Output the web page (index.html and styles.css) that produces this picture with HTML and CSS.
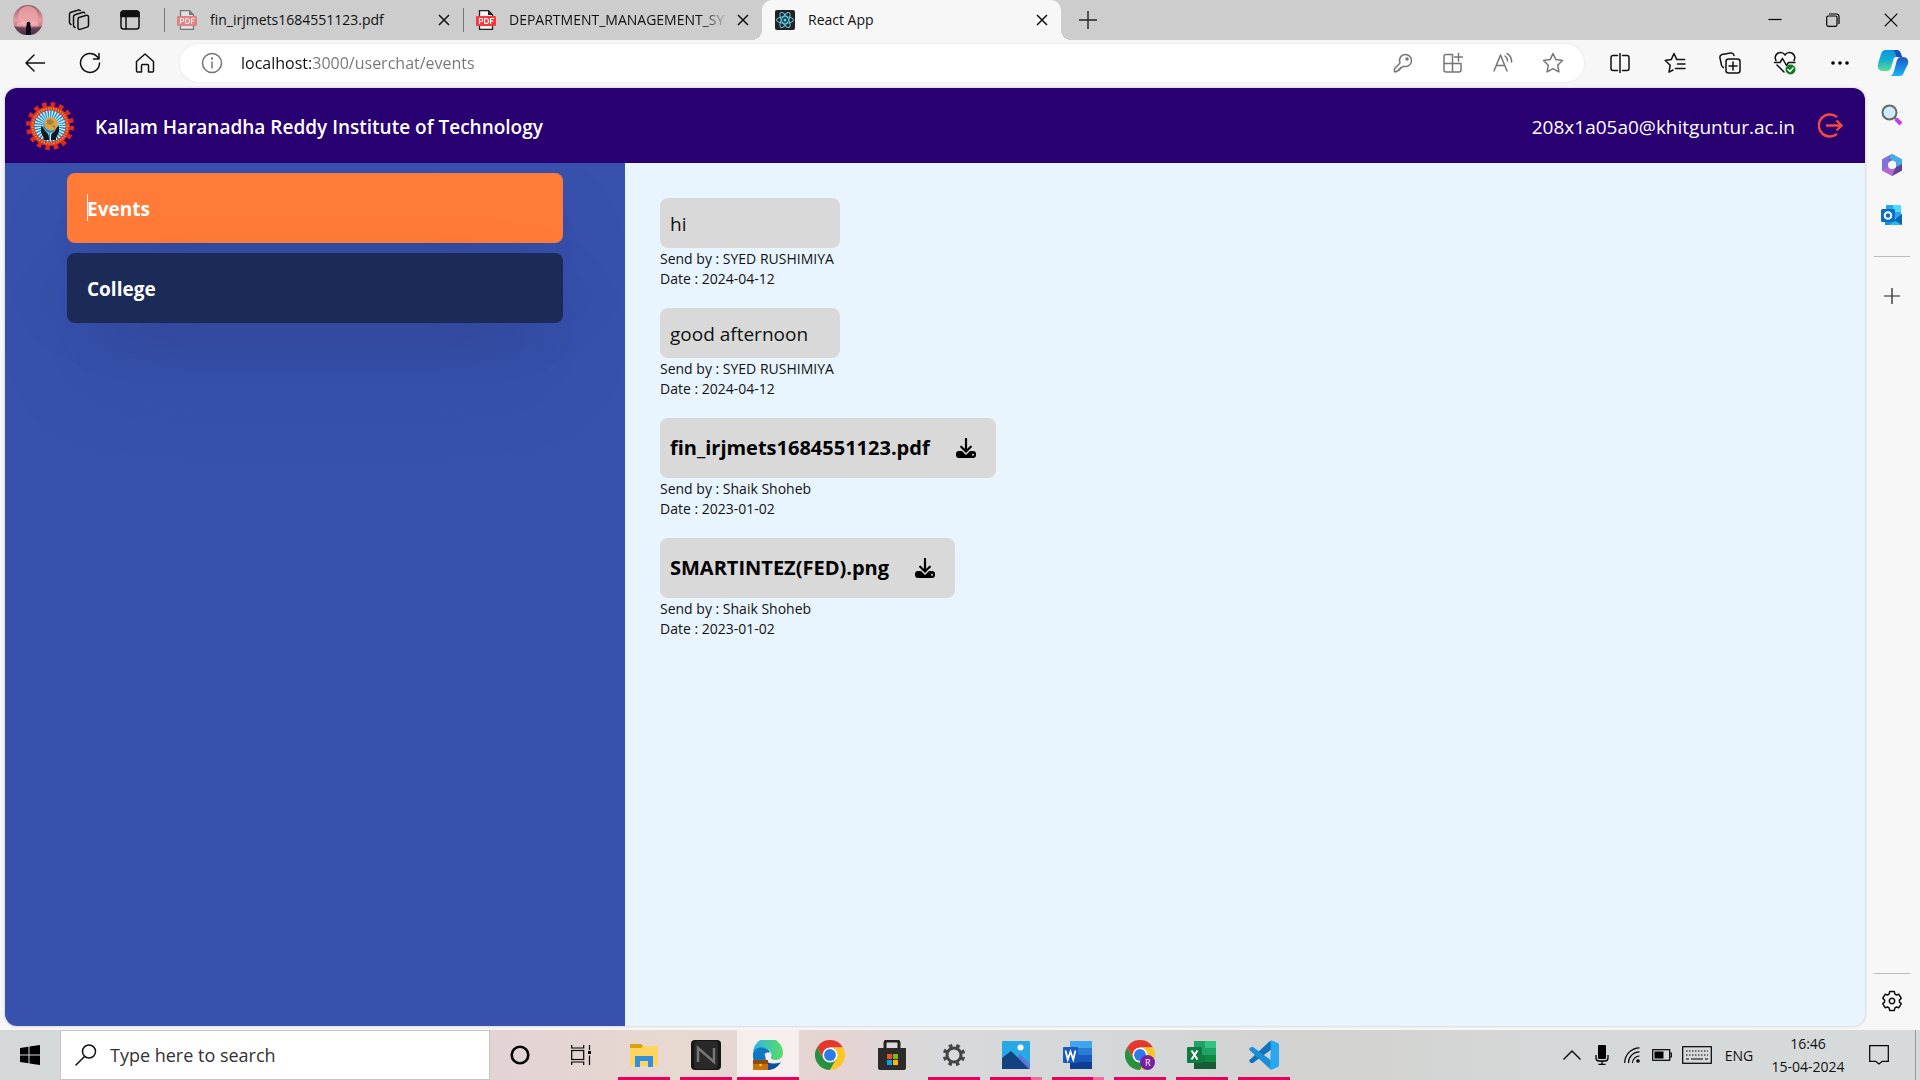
FILE: index.html
```html
<!DOCTYPE html>
<html lang="en">
<head>
<meta charset="utf-8">
<title>React App</title>
<link rel="stylesheet" href="styles.css">
</head>
<body>
<svg class="defs" aria-hidden="true">
  <symbol id="close" viewBox="0 0 12 12"><path d="M1 1l10 10M11 1L1 11" fill="none" stroke="#111" stroke-width="1.5"/></symbol>
  <symbol id="pdf" viewBox="0 0 20 20"><path d="M3.500 .7h9l4 4v14.600h-13z" fill="#f4f4f4" stroke="#222" stroke-width="1.300"/><path d="M12 0v5h5z" fill="#222"/><rect y="6" width="20" height="10" rx="1" fill="#f8383c"/><path d="M3.500 14V8.500h1.700a1.500 1.500 0 0 1 0 3H3.500M8.700 8.500v5h1.300a2.500 2.500 0 0 0 0-5zM14.500 14V8.500H18M14.500 11.200h2.700" fill="none" stroke="#fff" stroke-width="1.200"/></symbol>
  <symbol id="plus" viewBox="0 0 18 18"><path d="M9 0v18M0 9h18" stroke="#222" stroke-width="1.400"/></symbol>
  <symbol id="chrome" viewBox="0 0 48 48"><path d="M24 12H44.800A24 24 0 0 0 3.200 12L13.600 30 24 24z" fill="#e3382c"/><path d="M3.200 12A24 24 0 0 0 24 48L34.400 30 24 24 13.600 30z" fill="#27913f"/><path d="M24 48A24 24 0 0 0 44.800 12H24V24L34.400 30z" fill="#fcc624"/><circle cx="24" cy="24" r="12" fill="#fff"/><circle cx="24" cy="24" r="9.500" fill="#2c7be8"/></symbol>
  <symbol id="download" viewBox="0 0 20 20"><path d="M3 13h3l4 4 4-4h3a3 3 0 0 1 3 3v1a3 3 0 0 1-3 3H3a3 3 0 0 1-3-3v-1a3 3 0 0 1 3-3z"/><path d="M10 1v12M5.200 8.500l4.800 5 4.800-5" fill="none" stroke="#d9d9d9" stroke-width="4"/><path d="M10 1v12M5.200 8.700l4.800 4.800 4.800-4.800" fill="none" stroke="#000" stroke-width="2.200" stroke-linecap="round"/><circle cx="17" cy="16.700" r="1" fill="#d9d9d9"/></symbol>
</svg>

<div class="screen">
  <header class="tabstrip">
    <button class="strip-btn" aria-label="Profile"><svg width="30" height="30" viewBox="0 0 30 30"><defs><linearGradient id="sky" x2="0" y2="1"><stop offset="0" stop-color="#8f5a6b"/><stop offset=".5" stop-color="#e59aa0"/><stop offset=".75" stop-color="#c8788a"/><stop offset="1" stop-color="#2c2238"/></linearGradient></defs><circle cx="15" cy="15" r="15" fill="url(#sky)"/><circle cx="15" cy="11" r="10" fill="#f0a5a8" opacity=".8"/><path d="M4 18l7-2 5 2 9-2v5H4z" fill="#f3c7c6" opacity=".5"/><path d="M1 21c8 2 20 2 28 0a15 15 0 0 1-28 0z" fill="#4a3048" opacity=".7"/><path d="M14 18h3l1 5v7h-5v-7z" fill="#0e0a18"/><circle cx="15.500" cy="18.500" r="1.800" fill="#0e0a18"/></svg></button>
    <button class="strip-btn" aria-label="Workspaces"><svg class="line" width="22" height="22" viewBox="0 0 22 22"><path d="M11 8.500l7.500-2.200a1.600 1.600 0 0 1 2 1.500v8.400a2 2 0 0 1-1.400 1.900l-7 2.300a1.600 1.600 0 0 1-2.100-1.500v-8.500a2 2 0 0 1 1-1.900z"/><path d="M7 18.500a2 2 0 0 1-1.500-2V8c0-1 .5-1.800 1.500-2.200l8-2.500a1.500 1.500 0 0 1 1.700.7M3 15.500a2 2 0 0 1-1.500-2V5.500c0-1 .5-1.800 1.500-2.200L10.500 1a1.500 1.500 0 0 1 1.700.5"/></svg></button>
    <button class="strip-btn" aria-label="Tab actions"><svg class="line" width="20" height="20" viewBox="0 0 20 20"><rect x="1" y="1" width="18" height="18" rx="2.500"/><path d="M1 6.500V3.500A2.500 2.500 0 0 1 3.500 1h13A2.500 2.500 0 0 1 19 3.500v3z" fill="#111"/><path d="M6 6v13"/></svg></button>
    <div class="tab">
      <svg class="faded" width="20" height="20"><use href="#pdf"/></svg>
      <span class="tab-title">fin_irjmets1684551123.pdf</span>
      <button class="tab-close" aria-label="Close tab"><svg width="12" height="12"><use href="#close"/></svg></button>
    </div>
    <div class="tab">
      <svg width="20" height="20"><use href="#pdf"/></svg>
      <span class="tab-title fade">DEPARTMENT_MANAGEMENT_SY</span>
      <button class="tab-close" aria-label="Close tab"><svg width="12" height="12"><use href="#close"/></svg></button>
    </div>
    <div class="tab active">
      <svg width="20" height="20" viewBox="0 0 20 20"><rect width="20" height="20" rx="2" fill="#222"/><g fill="none" stroke="#5fd0ee" stroke-width="1"><ellipse cx="10" cy="10" rx="8.500" ry="3.300"/><ellipse cx="10" cy="10" rx="8.500" ry="3.300" transform="rotate(60 10 10)"/><ellipse cx="10" cy="10" rx="8.500" ry="3.300" transform="rotate(120 10 10)"/></g><circle cx="10" cy="10" r="1.600" fill="#5fd0ee"/></svg>
      <span class="tab-title">React App</span>
      <button class="tab-close" aria-label="Close tab"><svg width="12" height="12"><use href="#close"/></svg></button>
    </div>
    <button class="new-tab" aria-label="New tab"><svg width="18" height="18"><use href="#plus"/></svg></button>
    <div class="window-controls">
      <button aria-label="Minimize"><svg class="thin" width="14" height="14" viewBox="0 0 14 14"><path d="M.5 6.500h13"/></svg></button>
      <button aria-label="Restore"><svg class="thin" width="14" height="14" viewBox="0 0 14 14"><rect x=".7" y="3" width="10.300" height="10.300" rx="1.500"/><path d="M3 1h7.500A2.500 2.500 0 0 1 13 3.500V11"/></svg></button>
      <button aria-label="Close window"><svg class="thin" width="14" height="14" viewBox="0 0 14 14"><path d="M.7.7l12.600 12.600M13.300.7L.7 13.300"/></svg></button>
    </div>
  </header>

  <nav class="toolbar">
    <div class="nav-group">
      <button class="tool" aria-label="Back"><svg class="line" width="20" height="20" viewBox="0 0 20 20"><path d="M9 2l-8 8 8 8M1 10h19"/></svg></button>
      <button class="tool" aria-label="Refresh"><svg class="line" width="22" height="22" viewBox="0 0 22 22"><path d="M20.500 11A9.500 9.500 0 1 1 18 4.500L20 7M20 1.500V7h-5.500"/></svg></button>
      <button class="tool" aria-label="Home"><svg class="line" width="20" height="20" viewBox="0 0 20 20"><path d="M1.500 8.500L10 1l8.500 7.500V18a1 1 0 0 1-1 1h-4v-6.500a1 1 0 0 0-1-1h-5a1 1 0 0 0-1 1V19h-4a1 1 0 0 1-1-1z"/></svg></button>
    </div>
    <div class="address">
      <svg class="line gray" width="22" height="22" viewBox="0 0 22 22"><circle cx="11" cy="11" r="9.500"/><path d="M11 10v6"/><circle cx="11" cy="6.500" r=".5"/></svg>
      <input class="url" type="text" aria-label="Address" value="localhost:3000/userchat/events">
      <button class="pill-btn" aria-label="Passwords"><svg class="line gray" width="20" height="20" viewBox="0 0 20 20"><path d="M12.500 1.500a6 6 0 0 1 0 12 6.500 6.500 0 0 1-2-.3L9 14.500H7.500V16H6v1.500H4.500l-1 1.200H1.500v-3L7 10a6 6 0 0 1 5.500-8.500z"/><circle cx="14" cy="6" r="1"/></svg></button>
      <button class="pill-btn" aria-label="App available"><svg class="line gray" width="20" height="20" viewBox="0 0 20 20"><path d="M9.500 1.500H3a2 2 0 0 0-2 2V17a2 2 0 0 0 2 2h13a2 2 0 0 0 2-2v-6.500H1M9.500 1.500V19M15.500 0v8M11.500 4h8"/></svg></button>
      <button class="pill-btn" aria-label="Read aloud"><svg class="line gray" width="20" height="20" viewBox="0 0 20 20"><path d="M1 18L7.500 2 14 18M3.400 12.500h8.200M12 3a6 6 0 0 1 2.500 5M14 .5A9 9 0 0 1 18.500 9"/></svg></button>
      <button class="pill-btn" aria-label="Add to favorites"><svg class="line gray" width="22" height="22" viewBox="0 0 22 22"><path d="M11 1.500l2.900 6.100 6.600.9-4.800 4.700 1.200 6.700-5.900-3.200-5.900 3.200 1.200-6.700L1.500 8.500l6.600-.9z"/></svg></button>
    </div>
    <div class="nav-group actions">
      <button class="tool" aria-label="Split screen"><svg class="line" width="20" height="20" viewBox="0 0 20 20"><path d="M7.500 2.500H3a2 2 0 0 0-2 2v11a2 2 0 0 0 2 2h4.500M12.500 2.500H17a2 2 0 0 1 2 2v11a2 2 0 0 1-2 2h-4.500M10 0v20"/></svg></button>
      <button class="tool" aria-label="Favorites"><svg class="line" width="22" height="22" viewBox="0 0 22 22"><path d="M6 19.700l-1 .5 1.200-7L1.200 8.500l6-.9L10 1.500l2.800 6.100h7.700M13.500 12h7.500M11.500 16.500H21M6 19.700l3-1.700"/></svg></button>
      <button class="tool" aria-label="Collections"><svg class="line" width="22" height="22" viewBox="0 0 22 22"><rect x="7" y="7" width="14" height="14" rx="2.500"/><path d="M14 10v8M10 14h8M4.500 15.500A3 3 0 0 1 2.500 13L1 6a3 3 0 0 1 2-3.500L11.500 1A3 3 0 0 1 15 3.500"/></svg></button>
      <button class="tool" aria-label="Browser essentials"><svg class="line" width="24" height="24" viewBox="0 0 24 24"><path d="M3 9.500A5 5 0 0 1 12 4a5 5 0 0 1 9 5.500M1.500 11.500H7l2.500-4 4 7 2-3h6.500M4 14l7 7"/><circle cx="17.500" cy="18.500" r="5" fill="#0f7b22" stroke="none"/><path d="M15 18.500l2 2 3-3.500" stroke="#fff"/></svg></button>
      <button class="tool" aria-label="More"><svg width="20" height="6" viewBox="0 0 20 6"><circle cx="3" cy="3" r="1.800"/><circle cx="10" cy="3" r="1.800"/><circle cx="17" cy="3" r="1.800"/></svg></button>
      <button class="tool copilot" aria-label="Copilot"><svg width="32" height="28" viewBox="0 0 32 28"><defs><linearGradient id="cpA" x2="0" y2="1"><stop offset="0" stop-color="#0a93e8"/><stop offset=".5" stop-color="#18b0cc"/><stop offset="1" stop-color="#5ddc96"/></linearGradient><linearGradient id="cpB" x2="0" y2="1"><stop offset="0" stop-color="#1e55c8"/><stop offset="1" stop-color="#19b4f4"/></linearGradient></defs><path d="M9 1h10c3 0 4 1 5 4l1 3h-5c-3 0-3 1-4 4l-2 7c-1 2-2 3-4 3H6c-4 0-6-3-5-7L4 5c1-3 2-4 5-4z" fill="url(#cpA)"/><path d="M22 27H12c3 0 4-2 5-5l3-11c1-2 2-3 4-3h2c4 0 6 3 5 7l-4 8c-1 3-2 4-5 4z" fill="url(#cpB)"/><path d="M19 1c3 0 4 1 5 4l1 3h-5c-2-1-1-7-5-7z" fill="#184fb8"/></svg></button>
    </div>
  </nav>

  <div class="workspace">
    <main class="page">
      <header class="app-header">
        <svg width="48" height="48" viewBox="0 0 48 48"><circle cx="24" cy="24" r="21.500" fill="none" stroke="#d92b22" stroke-width="5" stroke-dasharray="4.440 4.000"/><circle cx="24" cy="24" r="20" fill="#d8321f"/><circle cx="24" cy="24" r="17.500" fill="none" stroke="#e8903c" stroke-width="2.400" stroke-dasharray="1.300 1.200"/><circle cx="24" cy="24" r="15.500" fill="#1d8ccb"/><circle cx="24" cy="24" r="11" fill="none" stroke="#d9f1fa" stroke-width="9" stroke-dasharray="1.100 1.200"/><circle cx="25" cy="22" r="6.800" fill="#d9a441"/><path d="M21 18l4-1 3 3-3 3-4-1zM26 24l3-1v3z" fill="#a97f35"/><path d="M15 24c2 0 3 4 5 6 3 2 3 4 3 8h-5c0-4-3-6-3-9zM33 24c-2 0-3 4-5 6-3 2-3 4-3 8h5c0-4 3-6 3-9z" fill="#17181c"/></svg>
        <h1 class="college">Kallam Haranadha Reddy Institute of Technology</h1>
        <span class="email">208x1a05a0@khitguntur.ac.in</span>
        <button class="logout" aria-label="Log out"><svg width="25" height="25" viewBox="0 0 25 25"><path d="M19 4.200A11 11 0 1 0 19 20.800M8 12.500h15M18.500 7.500l5 5-5 5" fill="none" stroke="#f9483f" stroke-width="2.300"/></svg></button>
      </header>
      <div class="app-body">
        <nav class="channels">
          <a class="channel selected" href="#events"><span class="caret"></span>Events</a>
          <a class="channel" href="#college">College</a>
        </nav>
        <section class="messages">
          <article class="message">
            <p class="bubble">hi</p>
            <p class="meta">Send by : SYED RUSHIMIYA</p>
            <p class="meta">Date : 2024-04-12</p>
          </article>
          <article class="message">
            <p class="bubble">good afternoon</p>
            <p class="meta">Send by : SYED RUSHIMIYA</p>
            <p class="meta">Date : 2024-04-12</p>
          </article>
          <article class="message">
            <div class="bubble file"><span>fin_irjmets1684551123.pdf</span><button aria-label="Download"><svg width="20" height="20"><use href="#download"/></svg></button></div>
            <p class="meta">Send by : Shaik Shoheb</p>
            <p class="meta">Date : 2023-01-02</p>
          </article>
          <article class="message">
            <div class="bubble file"><span>SMARTINTEZ(FED).png</span><button aria-label="Download"><svg width="20" height="20"><use href="#download"/></svg></button></div>
            <p class="meta">Send by : Shaik Shoheb</p>
            <p class="meta">Date : 2023-01-02</p>
          </article>
        </section>
      </div>
    </main>
    <aside class="edgebar">
      <button aria-label="Search"><svg width="22" height="22" viewBox="0 0 22 22"><path d="M13 13l3 3" stroke="#777" stroke-width="2"/><path d="M15 15l5 5" stroke="#c63bf2" stroke-width="4"/><circle cx="8.500" cy="8.500" r="7" fill="#cfeafb" stroke="#696969" stroke-width="2"/></svg></button>
      <button aria-label="Microsoft 365"><svg width="22" height="24" viewBox="0 0 22 24"><path d="M11 1l10 5.500v6L11 7 8 17 1 17V6.500z" fill="#5471d8"/><path d="M11 1l10 5.500v11L15 14V9L8 5z" fill="#44aee8"/><path d="M1 6.500L8 2.500V16l-3 3.500-4-2z" fill="#8173dc"/><path d="M1 17.500L7 14l7 1 7-4v6.500L11 23z" fill="#ae6bcf"/><path d="M15 14l6-3v6.500L11 23z" fill="#684098"/><circle cx="11" cy="12" r="4" fill="#f7f7f7"/></svg></button>
      <button aria-label="Outlook"><svg width="22" height="22" viewBox="0 0 22 22"><rect x="5" y="1" width="15" height="13" fill="#28a8ea"/><path d="M12 1h8v7h-8z" fill="#50d9ff"/><path d="M4 11l9 5 8-6v11H4z" fill="#1490df"/><path d="M21 10v11H8z" fill="#28b8ee"/><path d="M21 10v11l-8-5z" fill="#0a65b0"/><rect y="5" width="14" height="13" rx="1.500" fill="#0a6cc4"/><circle cx="7" cy="11.500" r="3.300" fill="none" stroke="#fff" stroke-width="2"/></svg></button>
      <hr class="rule">
      <button aria-label="Customize"><svg width="16" height="16"><use href="#plus"/></svg></button>
      <hr class="rule bottom">
      <button aria-label="Settings"><svg class="line" width="22" height="22" viewBox="-11 -11 22 22"><path d="M-2.300-9.500H2.300L2.900-6.900 4.500-6 6.900-6.700 9.300-2.700 7.400-.9V.9L9.300 2.700 6.900 6.700 4.500 6 2.900 6.900 2.300 9.500H-2.300L-2.900 6.900-4.500 6-6.900 6.700-9.300 2.700-7.400.9V-.9L-9.300-2.700-6.900-6.700-4.500-6-2.900-6.900z"/><circle r="2.700"/></svg></button>
    </aside>
  </div>

  <footer class="taskbar">
    <button class="start" aria-label="Start"><svg width="20" height="20" viewBox="0 0 20 20"><path d="M0 3l8.500-1.300v7.800H0zM9.500 1.500L20 0v9.500H9.500zM0 10.500h8.500v7.800L0 17zM9.500 10.500H20V20L9.500 18.500z"/></svg></button>
    <label class="search">
      <svg class="line" width="22" height="22" viewBox="0 0 22 22"><circle cx="14" cy="7.500" r="6.500"/><path d="M9.500 12.500L1 21"/></svg>
      <input type="text" placeholder="Type here to search" aria-label="Type here to search">
    </label>
    <div class="apps">
      <button class="app cortana" aria-label="Cortana"><svg width="20" height="20" viewBox="0 0 20 20"><circle cx="10" cy="10" r="8.300" fill="none" stroke="#000" stroke-width="2.600"/></svg></button>
      <button class="app taskview" aria-label="Task view"><svg class="thin" width="20" height="20" viewBox="0 0 20 20"><rect x=".7" y="5.500" width="12" height="9"/><path d="M.7 0v3h12V0M.7 20v-3h12v3M18.500 0v5M18.500 10.500V20"/><path d="M17 6h3v3h-3z" fill="#000" stroke="none"/></svg></button>
      <button class="app open" aria-label="File Explorer"><svg width="28" height="24" viewBox="0 0 28 24"><path d="M0 1h11l2 2v4H0z" fill="#dfa010"/><path d="M0 5h11l2-2h15v19a1 1 0 0 1-1 1H0z" fill="#ffd45f"/><path d="M5 24V13h18v11h-5v-6h-8v6z" fill="#3390dd"/></svg></button>
      <button class="app open" aria-label="Notebook"><svg width="30" height="30" viewBox="0 0 30 30"><rect width="30" height="30" rx="4" fill="#161616"/><rect x="3" y="1" width="24" height="28" rx="4" fill="#292929"/><path d="M7 22V8l16 14V8" fill="none" stroke="#777" stroke-width="2.500"/></svg></button>
      <button class="app current" aria-label="Microsoft Edge"><svg width="30" height="30" viewBox="0 0 30 30"><defs><linearGradient id="eg"><stop offset="0" stop-color="#2eb3e6"/><stop offset="1" stop-color="#59de65"/></linearGradient></defs><path d="M0 13A15 15 0 0 1 30 13c0 4-3 7-7 7-3 0-6-1-5-3 2-5-3-9-8-9-5 0-10 2-10 5z" fill="url(#eg)"/><path d="M0 14c1-9 16-8 17-1-5-2-8 3-4 8 4 4 10 3 15 1-3 5-8 8-14 8A14.500 14.500 0 0 1 0 14z" fill="#0c77c4"/><path d="M12 14c-3 5 2 12 15 9-3 5-8 7-13 7z" fill="#104f9d"/><rect y="20" width="15" height="10" fill="#c8700c"/><rect y="20" width="15" height="4" fill="#8f4b05"/><circle cx="7.500" cy="25" r="1.200" fill="#ffd447"/></svg></button>
      <button class="app" aria-label="Google Chrome"><svg width="30" height="30"><use href="#chrome"/></svg></button>
      <button class="app" aria-label="Microsoft Store"><svg width="30" height="30" viewBox="0 0 30 30"><path d="M8 8V3a2 2 0 0 1 2-2h10a2 2 0 0 1 2 2v5" fill="none" stroke="#222" stroke-width="3"/><path d="M1 8h28v20a2 2 0 0 1-2 2H3a2 2 0 0 1-2-2z" fill="#2b2b2b"/><path d="M10 14h5v5h-5z" fill="#f25022"/><path d="M16 14h5v5h-5z" fill="#7fba00"/><path d="M10 20h5v5h-5z" fill="#00a4ef"/><path d="M16 20h5v5h-5z" fill="#ffb900"/></svg></button>
      <button class="app open" aria-label="Settings"><svg width="24" height="24" viewBox="0 0 24 24"><g fill="none" stroke="#444"><circle cx="12" cy="12" r="7" stroke-width="3"/><circle cx="12" cy="12" r="9.500" stroke-width="3.500" stroke-dasharray="3.500 3.960" stroke-dashoffset="-2"/></g></svg></button>
      <button class="app open many" aria-label="Photos"><svg width="28" height="28" viewBox="0 0 28 28"><rect width="28" height="28" rx="1" fill="#27a9e8"/><path d="M12 20l6-7 10 10v5H12z" fill="#5b77d8"/><path d="M0 17L9 10 27 28H0z" fill="#12427f"/><circle cx="18.500" cy="6.500" r="3" fill="#fff"/></svg></button>
      <button class="app open many" aria-label="Word"><svg width="30" height="28" viewBox="0 0 30 28"><path d="M7 0h22v7H7z" fill="#41a5ee"/><path d="M7 7h22v7H7z" fill="#2b7cd3"/><path d="M7 14h22v7H7z" fill="#185abd"/><path d="M7 21h22v7H7z" fill="#103f91"/><rect y="6" width="15" height="16" rx="1" fill="#185abd"/><path d="M2.500 9.500l2.300 9 2.700-8 2.700 8 2.300-9" fill="none" stroke="#fff" stroke-width="1.800"/></svg></button>
      <button class="app open" aria-label="Google Chrome, profile R"><svg width="30" height="30" viewBox="0 0 30 30"><use href="#chrome"/><circle cx="22.500" cy="22.500" r="7.500" fill="#7a1ea1"/><text class="profile-letter" x="20" y="26">R</text></svg></button>
      <button class="app open" aria-label="Excel"><svg width="30" height="28" viewBox="0 0 30 28"><path d="M7 0h22v28H7z" fill="#21a366"/><path d="M18 0h11v7H18z" fill="#33c481"/><path d="M7 14h22v7H7z" fill="#107c41"/><path d="M7 21h22v7H7z" fill="#185c37"/><path d="M18 14h11v7H18z" fill="#0f8a45"/><rect y="6" width="15" height="16" rx="1" fill="#107c41"/><path d="M4.500 9.500l6 9M10.500 9.500l-6 9" stroke="#fff" stroke-width="2"/></svg></button>
      <button class="app open" aria-label="Visual Studio Code"><svg width="30" height="30" viewBox="0 0 30 30"><path d="M1 19.500L21 1l2 1v7L4 23H2L0 21z" fill="#0f74bd"/><path d="M1 10.500L21 29l2-1v-7L4 7H2L0 9z" fill="#198fd6"/><path d="M22 0l7 3a2 2 0 0 1 1 2v20a2 2 0 0 1-1 2l-7 3-1-1z" fill="#2aa7f2"/></svg></button>
    </div>
    <div class="tray">
      <button aria-label="Show hidden icons"><svg class="line" width="18" height="10" viewBox="0 0 18 10"><path d="M1 9l8-8 8 8"/></svg></button>
      <button aria-label="Microphone"><svg width="14" height="20" viewBox="0 0 14 20"><rect x="3" width="8" height="14" rx="1"/><path d="M1 10v3a3 3 0 0 0 3 3h6a3 3 0 0 0 3-3v-3M7 16v3M3.500 19.300h7" fill="none" stroke="#000" stroke-width="1.300"/></svg></button>
      <button aria-label="Network"><svg class="thin" width="16" height="16" viewBox="0 0 16 16"><path d="M.7 16A15 15 0 0 1 15.500.8M4.500 16A11 11 0 0 1 15.500 4.800M8.500 16a7 7 0 0 1 7-7"/><circle cx="14" cy="14" r="1.800" fill="#000" stroke="none"/></svg></button>
      <button aria-label="Battery"><svg class="thin" width="20" height="12" viewBox="0 0 20 12"><rect x=".7" y=".7" width="17" height="10.600"/><path d="M18 4h1.300v4H18"/><path d="M2.500 2.500h9v7h-9z" fill="#000" stroke="none"/></svg></button>
      <button class="keyboard" aria-label="Touch keyboard"><svg class="thin" width="30" height="18" viewBox="0 0 30 18"><rect x=".7" y=".7" width="28.600" height="16.600"/><path d="M4 5h22M4 9h22" stroke-dasharray="1.500 1.500"/><path d="M4 13h3M9 13h12M23 13h3"/></svg></button>
      <button class="lang">ENG</button>
      <button class="clock"><span>16:46</span><span>15-04-2024</span></button>
      <button class="notify" aria-label="Notifications"><svg class="thin" width="20" height="20" viewBox="0 0 20 20"><path d="M.7.7h18.600v15.600h-6L10 19l-3.300-2.700h-6z"/></svg></button>
      <button class="peek" aria-label="Show desktop"></button>
    </div>
  </footer>
</div>
</body>
</html>
```
FILE: styles.css
```css
* { box-sizing: border-box; }

body {
  margin: 0;
  font-family: "Open Sans", "Noto Sans", sans-serif;
  color: #111;
}

button {
  padding: 0;
  border: 0;
  background: none;
  color: inherit;
  font: inherit;
  display: flex;
  align-items: center;
  justify-content: center;
  flex: none;
}

input { border: 0; outline: 0; padding: 0; background: none; font: inherit; }
p, h1 { margin: 0; }
svg { flex: none; display: block; }

.defs { position: absolute; width: 0; height: 0; }
.line { fill: none; stroke: #111; stroke-width: 1.5; stroke-linecap: round; stroke-linejoin: round; }
.line.gray { stroke: #757575; }
.thin { fill: none; stroke: #000; stroke-width: 1.2; }
.faded { opacity: .5; }

.screen {
  display: grid;
  grid-template-rows: 40px 48px 1fr 50px;
  min-height: 100vh;
  background: #f7f7f7;
}

/* Tab strip */
.tabstrip {
  display: flex;
  align-items: stretch;
  padding-left: 2px;
  background: #cdcdcd;
}
.strip-btn { width: 51px; }
.strip-btn:nth-child(3) { margin-right: 9px; }
.tab {
  position: relative;
  display: flex;
  align-items: center;
  flex: 0 1 299px;
  min-width: 0;
  padding: 0 13px;
}
.tab:not(.active)::before {
  content: "";
  position: absolute;
  left: 0;
  top: 8px;
  bottom: 8px;
  width: 1px;
  background: #777;
}
.tab.active { background: #f7f7f7; border-radius: 10px 10px 0 0; }
.tab.active::before,
.tab.active::after {
  content: "";
  position: absolute;
  bottom: 0;
  width: 10px;
  height: 10px;
}
.tab.active::before { right: 100%; background: radial-gradient(circle at 0 0, transparent 10px, #f7f7f7 10px); }
.tab.active::after { left: 100%; background: radial-gradient(circle at 100% 0, transparent 10px, #f7f7f7 10px); }
.tab-title {
  flex: 1;
  min-width: 0;
  margin: 0 8px 0 13px;
  overflow: hidden;
  white-space: nowrap;
  font-size: 14px;
  line-height: 20px;
}
.fade { mask-image: linear-gradient(90deg, #000 calc(100% - 28px), transparent); }
.tab-close { width: 12px; }
.new-tab { width: 54px; }
.window-controls { display: flex; margin-left: auto; }
.window-controls button { width: 58px; }

/* Toolbar */
.toolbar {
  display: flex;
  align-items: center;
  padding: 0 2px 2px 7px;
}
.nav-group { display: flex; }
.tool { width: 55px; height: 38px; }
.copilot { width: 51px; }
.address {
  display: flex;
  align-items: center;
  flex: 1;
  height: 38px;
  margin: 0 8px;
  padding: 0 6px 0 21px;
  border-radius: 20px;
  background: #fff;
  box-shadow: 0 0 3px #e4e4e4;
}
.url {
  flex: 1;
  min-width: 0;
  height: 28px;
  margin-left: 18px;
  font-size: 16px;
  color: transparent;
  background: linear-gradient(90deg, #111 71px, #757575 71px);
  -webkit-background-clip: text;
  background-clip: text;
}
.pill-btn { width: 50px; height: 38px; }

/* Page frame */
.workspace { display: flex; padding: 0 0 4px 5px; }
.page {
  display: flex;
  flex-direction: column;
  flex: 1;
  min-width: 0;
  overflow: hidden;
  border-radius: 12px;
  background: #e8f5ff;
  box-shadow: 0 0 3px #bbb;
}
.edgebar {
  display: flex;
  flex-direction: column;
  align-items: center;
  width: 55px;
  padding: 2px 1px 0 0;
}
.edgebar button { width: 50px; height: 50px; }
.rule {
  width: 36px;
  height: 1px;
  margin: 16px 0 14px;
  border: 0;
  background: #bcbcbc;
}
.rule.bottom { margin: auto 0 2px; }

/* App */
.app-header {
  display: flex;
  align-items: center;
  height: 75px;
  padding: 0 22px 0 21px;
  background: #280071;
  color: #fff;
  font-size: 19px;
}
.college { margin: 0 auto 0 21px; padding-top: 2px; font-size: 19px; font-weight: 600; }
.email { margin-right: 23px; padding-top: 2px; }
.app-body { display: flex; flex: 1; }
.channels {
  display: flex;
  flex-direction: column;
  align-items: center;
  gap: 10px;
  flex: 0 0 33.333%;
  padding: 10px 0;
  overflow: hidden;
  background: #3751ad;
}
.channel {
  position: relative;
  width: 80%;
  padding: 21px 20px 19px;
  border-radius: 8px;
  background: #1b2a57;
  color: #fff;
  font-size: 19px;
  font-weight: 700;
  line-height: 30px;
  text-decoration: none;
  box-shadow: 0 50px 100px -20px rgba(50, 50, 93, .25), 0 30px 60px -30px rgba(0, 0, 0, .3);
}
.channel.selected { background: #ff7b37; }
.caret {
  position: absolute;
  left: 20px;
  top: 21px;
  width: 1px;
  height: 27px;
  background: #fff;
}
.messages {
  display: flex;
  flex-direction: column;
  align-items: flex-start;
  gap: 19px;
  padding: 35px;
}
.message { min-width: 180px; }
.bubble {
  margin-bottom: 1px;
  padding: 11px 10px 9px;
  border-radius: 8px;
  background: #d9d9d9;
  font-size: 19px;
  line-height: 30px;
}
.file {
  display: flex;
  align-items: center;
  gap: 26px;
  padding: 15px 20px 15px 10px;
  color: #000;
  font-size: 20px;
  font-weight: 700;
}
.meta { font-size: 14px; line-height: 20px; }

/* Taskbar */
.taskbar {
  display: flex;
  background: linear-gradient(90deg, #d5d8d9 0, #d5d8d9 3%, #e3d3d5 26%, #e7d8d0 35%, #e5d4d4 44%, #d7d9da 49%, #d4d7d8 60%, #d2d2cf 68%, #d5d8d8 80%, #d7dada 100%);
}
.start { width: 60px; }
.search {
  display: flex;
  align-items: center;
  gap: 13px;
  flex: 0 1 430px;
  padding-left: 14px;
  border: 1px solid #c6c6c6;
  background: #fff;
}
.search input { flex: 1; min-width: 0; font-size: 18px; }
.search input::placeholder { color: #333; opacity: 1; }
.apps { display: flex; }
.app { position: relative; width: 62px; }
.cortana { width: 60px; }
.taskview { margin-right: 1px; }
.app.current { background: #f5eeec; }
.app.open::after,
.app.current::after {
  content: "";
  position: absolute;
  left: 5px;
  right: 5px;
  bottom: 0;
  height: 3px;
  background: #e8005f;
}
.app.current::after { left: 0; right: 0; }
.app.many::after { background: linear-gradient(90deg, #e8005f 41px, #f26a9e 41px); }
.profile-letter { font-size: 9px; fill: #fff; }
.tray {
  display: flex;
  margin-left: auto;
  font-size: 14px;
}
.tray button { width: 30px; }
.tray .keyboard { width: 40px; }
.tray .lang { width: 44px; }
.tray .clock { width: 94px; flex-direction: column; line-height: 23px; }
.tray .notify { width: 48px; }
.tray .peek { width: 5px; margin-left: 12px; border-left: 1px solid #999; }
```
